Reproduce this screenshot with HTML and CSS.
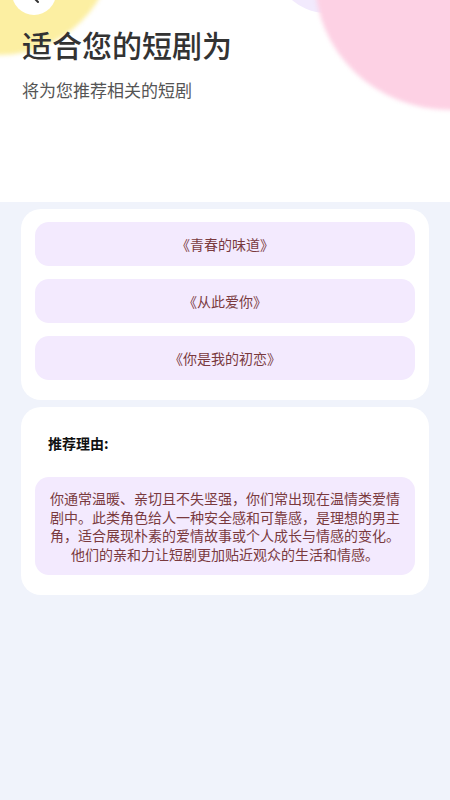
FILE: index.html
```html
<!DOCTYPE html>
<html lang="zh-CN">
<head>
  <meta charset="UTF-8" />
  <meta name="viewport" content="width=device-width, initial-scale=1.0"/>
  <title>适合您的短剧</title>
  <link rel="stylesheet" href="styles.css">
</head>
<body>

  <header class="top">
    <div class="blob blob-yellow"></div>
    <div class="blob blob-purple"></div>
    <div class="blob blob-pink"></div>
    <div class="back-btn">
      <svg width="16" height="16" viewBox="0 0 16 16">
        <path d="M10 -4 L5 1 L10 6" fill="none" stroke="#333" stroke-width="2" stroke-linecap="round" stroke-linejoin="round"/>
      </svg>
    </div>
    <div class="title-block">
      <h1>适合您的短剧为</h1>
      <p>将为您推荐相关的短剧</p>
    </div>
  </header>

  <main>
    <section class="card drama-list">
      <div class="drama-item">《青春的味道》</div>
      <div class="drama-item">《从此爱你》</div>
      <div class="drama-item">《你是我的初恋》</div>
    </section>

    <section class="card reason-card">
      <div class="reason-label">推荐理由:</div>
      <div class="reason-text">你通常温暖、亲切且不失坚强，你们常出现在温情类爱情剧中。此类角色给人一种安全感和可靠感，是理想的男主角，适合展现朴素的爱情故事或个人成长与情感的变化。他们的亲和力让短剧更加贴近观众的生活和情感。</div>
    </section>
  </main>

</body>
</html>
```

FILE: styles.css
```css
body {
  font-family: "Noto Sans CJK SC", "Noto Sans", sans-serif;
  background: #f0f3fb;
  margin: 0;
  padding: 0;
  color: #333;
  min-height: 800px;
}

.top {
  position: relative;
  height: 202px;
  background: white;
  overflow: hidden;
}

.blob {
  position: absolute;
  border-radius: 50%;
}

.blob-yellow {
  left: -115px;
  top: -175px;
  width: 230px;
  height: 230px;
  background: #fcefa2;
  filter: blur(2px);
}

.blob-purple {
  left: 272px;
  top: -100px;
  width: 110px;
  height: 113px;
  background: #f2eafd;
}

.blob-pink {
  left: 315px;
  top: -150px;
  width: 270px;
  height: 260px;
  background: #fdd1e4;
  filter: blur(2px);
}

.back-btn {
  position: absolute;
  left: 12px;
  top: -29px;
  width: 44px;
  height: 44px;
  border-radius: 50%;
  background: white;
  display: flex;
  justify-content: center;
  align-items: flex-end;
}

.back-btn svg {
  overflow: visible;
  margin-bottom: 3px;
  margin-left: 4px;
}

.title-block {
  position: relative;
  padding: 24px 22px 0 22px;
}

.title-block h1 {
  font-size: 30px;
  line-height: 40px;
  font-weight: 500;
  color: #333;
  margin: 0;
}

.title-block p {
  font-size: 17px;
  line-height: 24px;
  color: #555;
  margin: 14px 0 0 0;
}

main {
  padding: 7px 21px;
  display: flex;
  flex-direction: column;
  gap: 7px;
}

.card {
  background: white;
  border-radius: 20px;
}

.drama-list {
  padding: 13px 14px 20px 14px;
  display: flex;
  flex-direction: column;
  gap: 13px;
}

.drama-item {
  height: 44px;
  border-radius: 14px;
  background: #f3eafe;
  color: #7a3a3e;
  font-size: 14px;
  display: flex;
  align-items: center;
  justify-content: center;
}

.reason-card {
  padding: 26px 14px 20px 14px;
}

.reason-label {
  font-size: 14px;
  line-height: 20px;
  font-weight: bold;
  color: #111;
  padding-left: 13px;
  margin-bottom: 24px;
}

.reason-text {
  background: #f3eafe;
  border-radius: 14px;
  padding: 12px 14px;
  font-size: 14px;
  line-height: 18.5px;
  color: #7a3a3e;
  text-align: center;
}
```
